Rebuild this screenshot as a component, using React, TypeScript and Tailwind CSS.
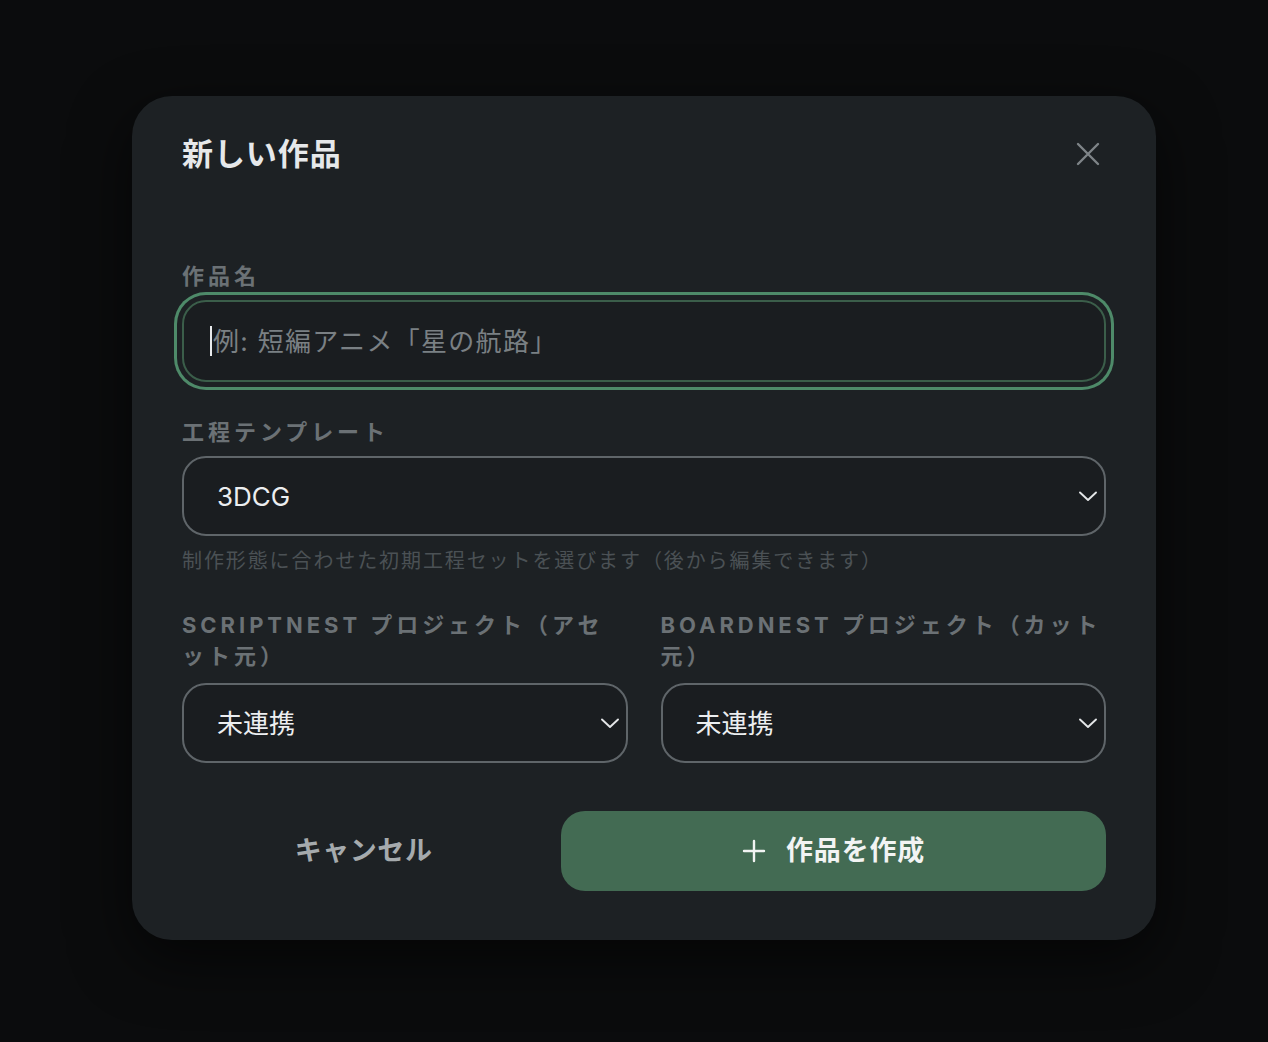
import { useState } from "react"

const FONT = "font-['Inter','Noto_Sans_CJK_JP',sans-serif]"

function Chevron() {
  return (
    <svg width="20" height="12" viewBox="0 0 20 12" fill="none" className="shrink-0">
      <path d="M2 2.5 L10 10 L18 2.5" stroke="#e4e6e8" strokeWidth="1.9" strokeLinecap="round" strokeLinejoin="round" />
    </svg>
  )
}

function Label({ children, gap = "mb-[8px]" }: { children: React.ReactNode; gap?: string }) {
  return (
    <div className={`text-[22px] leading-[31px] font-bold tracking-[0.18em] text-[#6b7175] ${gap}`}>
      {children}
    </div>
  )
}

function SelectBox({ value }: { value: string }) {
  return (
    <div className="h-[80px] flex items-center justify-between pl-[33px] pr-[6px] rounded-[24px] border-2 border-[#5f6569] bg-[#1a1d20]">
      <span className="text-[26px] text-[#eceef0]">{value}</span>
      <Chevron />
    </div>
  )
}

export default function App() {
  const [title] = useState("")

  return (
    <div className={`${FONT} min-h-[1042px] bg-[#0b0c0d] pt-[96px] pl-[132px]`}>
      <div className="w-[1024px] rounded-[40px] bg-[#1d2124] px-[50px] pt-[36px] pb-[49px] shadow-[0_20px_60px_rgba(0,0,0,0.6)]">
        {/* header */}
        <div className="flex items-center justify-between">
          <h2 className="text-[31px] leading-[44px] font-bold text-[#e6e8ea] tracking-[0.03em]">新しい作品</h2>
          <button className="mr-[6px] text-[#7e8488]">
            <svg width="24" height="24" viewBox="0 0 24 24" fill="none">
              <path d="M2 2 L22 22 M22 2 L2 22" stroke="currentColor" strokeWidth="2.4" strokeLinecap="round" />
            </svg>
          </button>
        </div>

        <div className="mt-[85px]">
          <Label>作品名</Label>
          <div className="h-[82px] flex items-center pl-[26px] rounded-[24px] border-2 border-[#3b5e4a] bg-[#1a1d20] ring-[3px] ring-[#4e8a69] ring-offset-[5px] ring-offset-[#1d2124]">
            <span className="w-[2px] h-[30px] bg-[#e8eaec] mr-[1px]" />
            <span className="text-[26px] tracking-[0.05em] text-[#7a8084]">{title || "例: 短編アニメ「星の航路」"}</span>
          </div>
        </div>

        <div className="mt-[35px]">
          <Label>工程テンプレート</Label>
          <SelectBox value="3DCG" />
          <p className="mt-[11px] text-[20px] leading-[28px] tracking-[0.095em] text-[#4b5155]">
            制作形態に合わせた初期工程セットを選びます（後から編集できます）
          </p>
        </div>

        <div className="mt-[35px] grid grid-cols-2 gap-[33px]">
          <div>
            <Label gap="mb-[11px]">SCRIPTNEST プロジェクト（アセット元）</Label>
            <SelectBox value="未連携" />
          </div>
          <div>
            <Label gap="mb-[11px]">BOARDNEST プロジェクト（カット元）</Label>
            <SelectBox value="未連携" />
          </div>
        </div>

        <div className="mt-[48px] flex gap-4">
          <button className="flex-[2] h-[80px] rounded-[24px] text-[27px] font-bold tracking-[0.02em] text-[#a5aaad]">
            キャンセル
          </button>
          <button className="flex-[3] h-[80px] rounded-[24px] bg-[#436b53] flex items-center justify-center gap-[20px] text-[27px] font-bold tracking-[0.03em] text-[#f2f4f3]">
            <svg width="24" height="24" viewBox="0 0 24 24" fill="none">
              <path d="M12 2 V22 M2 12 H22" stroke="currentColor" strokeWidth="2.4" strokeLinecap="round" />
            </svg>
            作品を作成
          </button>
        </div>
      </div>
    </div>
  )
}
